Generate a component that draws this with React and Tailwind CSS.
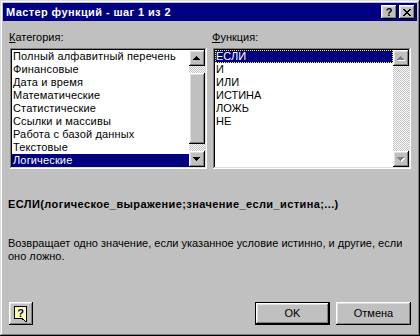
import React from 'react';

const raised = 'shadow-[inset_-1px_-1px_#000000,inset_1px_1px_#ffffff,inset_-2px_-2px_#808080,inset_2px_2px_#dfdfdf]';
const sunken = 'shadow-[inset_-1px_-1px_#ffffff,inset_1px_1px_#808080,inset_-2px_-2px_#dfdfdf,inset_2px_2px_#000000]';
const checker = 'bg-[image:repeating-conic-gradient(#c0c0c0_0%_25%,#ffffff_0%_50%)] bg-[length:2px_2px]';

const UP = 'M3 0h1v1h1v1h1v1h1v1H0V3h1V2h1V1h1z';
const DOWN = 'M0 0h7v1H6v1H5v1H4v1H3V3H2V2H1V1H0z';

const Arrow = ({ dir, disabled }) => {
  const d = dir === 'up' ? UP : DOWN;
  return (
    <svg width="8" height="5" viewBox="0 0 8 5" shapeRendering="crispEdges">
      {disabled && <path d={d} transform="translate(1 1)" fill="#ffffff" />}
      <path d={d} fill={disabled ? '#808080' : '#000000'} />
    </svg>
  );
};

const ScrollBtn = ({ dir, disabled }) => (
  <div className={`w-[16px] h-[16px] bg-[#c0c0c0] flex items-center justify-center ${raised}`}>
    <Arrow dir={dir} disabled={disabled} />
  </div>
);

const TitleBtn = ({ children }) => (
  <div className={`w-[16px] h-[14px] bg-[#c0c0c0] flex items-center justify-center text-black font-bold text-[11px] leading-[11px] ${raised}`}>
    {children}
  </div>
);

const Label = ({ first, rest }) => (
  <div className="h-[13px] -ml-[1px] mb-[4px]">
    <span className="underline underline-offset-[1px]">{first}</span>
    {rest}
  </div>
);

const categories = [
  'Полный алфавитный перечень',
  'Финансовые',
  'Дата и время',
  'Математические',
  'Статистические',
  'Ссылки и массивы',
  'Работа с базой данных',
  'Текстовые',
  'Логические',
];

const functions = ['ЕСЛИ', 'И', 'ИЛИ', 'ИСТИНА', 'ЛОЖЬ', 'НЕ'];

const ActionBtn = ({ children, isDefault }) => (
  <div className={`w-[75px] h-[23px] ${isDefault ? 'border border-black' : ''}`}>
    <div className={`w-full h-full bg-[#c0c0c0] flex items-center justify-center ${raised}`}>
      {children}
    </div>
  </div>
);

export default function App() {
  return (
    <div
      className={`w-[420px] h-[336px] bg-[#c0c0c0] p-[3px] flex flex-col text-black text-[11px] leading-[13px] font-['Liberation_Sans',Arial,sans-serif] shadow-[inset_-1px_-1px_#000000,inset_1px_1px_#dfdfdf,inset_-2px_-2px_#808080,inset_2px_2px_#ffffff]`}
    >
      {/* title bar */}
      <div className="h-[18px] bg-[#000080] flex items-center pl-[3px] pr-[2px]">
        <span className="flex-1 text-white font-bold tracking-[0.4px] pt-[1px]">Мастер функций - шаг 1 из 2</span>
        <TitleBtn>?</TitleBtn>
        <div className="w-[2px]" />
        <TitleBtn>
          <svg width="8" height="7" viewBox="0 0 8 7" shapeRendering="crispEdges">
            <path
              d="M0 0h2v1h1v1h2V1h1V0h2v1H7v1H6v1H5v1h1v1h1v1h1v1H6V6H5V5H3v1H2v1H0V6h1V5h1V4h1V3H2V2H1V1H0z"
              fill="#000000"
            />
          </svg>
        </TitleBtn>
      </div>

      <div className="flex-1 flex flex-col pl-[7px] pr-[6px]">
        <div className="flex gap-[6px] mt-[10px]">
          {/* categories */}
          <div className="w-[197px] flex flex-col">
            <Label first="К" rest="атегория:" />
            <div className={`h-[121px] bg-white p-[2px] flex ${sunken}`}>
              <div className="flex-1 flex flex-col">
                {categories.map((c, i) => (
                  <div
                    key={c}
                    className={`h-[13px] pl-[1px] whitespace-nowrap tracking-[0.15px] ${i === categories.length - 1 ? 'bg-[#000080] text-white' : ''}`}
                  >
                    {c}
                  </div>
                ))}
              </div>
              <div className="w-[16px] flex flex-col">
                <ScrollBtn dir="up" />
                <div className={`h-[7px] ${checker}`} />
                <div className={`h-[71px] bg-[#c0c0c0] ${raised}`} />
                <div className={`h-[7px] ${checker}`} />
                <ScrollBtn dir="down" />
              </div>
            </div>
          </div>

          {/* functions */}
          <div className="w-[198px] flex flex-col">
            <Label first="Ф" rest="ункция:" />
            <div className={`h-[121px] bg-white p-[2px] flex ${sunken}`}>
              <div className="flex-1 flex flex-col">
                {functions.map((f, i) => (
                  <div
                    key={f}
                    className={`h-[13px] whitespace-nowrap ${i === 0 ? 'bg-[#000080] text-white border border-dotted border-[#ffff00] leading-[11px]' : 'pl-[1px]'}`}
                  >
                    {f}
                  </div>
                ))}
              </div>
              <div className="w-[16px] flex flex-col">
                <ScrollBtn dir="up" disabled />
                <div className={`flex-1 ${checker}`} />
                <ScrollBtn dir="down" disabled />
              </div>
            </div>
          </div>
        </div>

        <div className="font-bold tracking-[0.4px] mt-[29px] -ml-[2px] whitespace-nowrap">
          ЕСЛИ(логическое_выражение;значение_если_истина;...)
        </div>
        <div className="mt-[26px] -ml-[2px] whitespace-nowrap">
          Возвращает одно значение, если указанное условие истинно, и другие, если
          <br />
          оно ложно.
        </div>

        <div className="mt-auto mb-[8px] flex items-end">
          <div className={`-ml-[1px] w-[24px] h-[23px] bg-[#c0c0c0] flex items-center justify-center ${raised}`}>
            <svg width="14" height="16" viewBox="0 0 14 16" shapeRendering="crispEdges">
              <rect x="0.5" y="0.5" width="12" height="12" fill="#ffffa8" stroke="#000000" />
              <path d="M8 12.5h4v3z" fill="#ffffa8" stroke="#000000" />
              <rect x="8.5" y="12" width="3" height="1" fill="#ffffa8" />
              <text x="6.5" y="10.5" textAnchor="middle" fontSize="11" fontWeight="bold" fill="#000080" fontFamily="Liberation Sans, Arial, sans-serif">?</text>
            </svg>
          </div>
          <div className="flex-1" />
          <ActionBtn isDefault>OK</ActionBtn>
          <div className="w-[6px]" />
          <ActionBtn>Отмена</ActionBtn>
        </div>
      </div>
    </div>
  );
}
